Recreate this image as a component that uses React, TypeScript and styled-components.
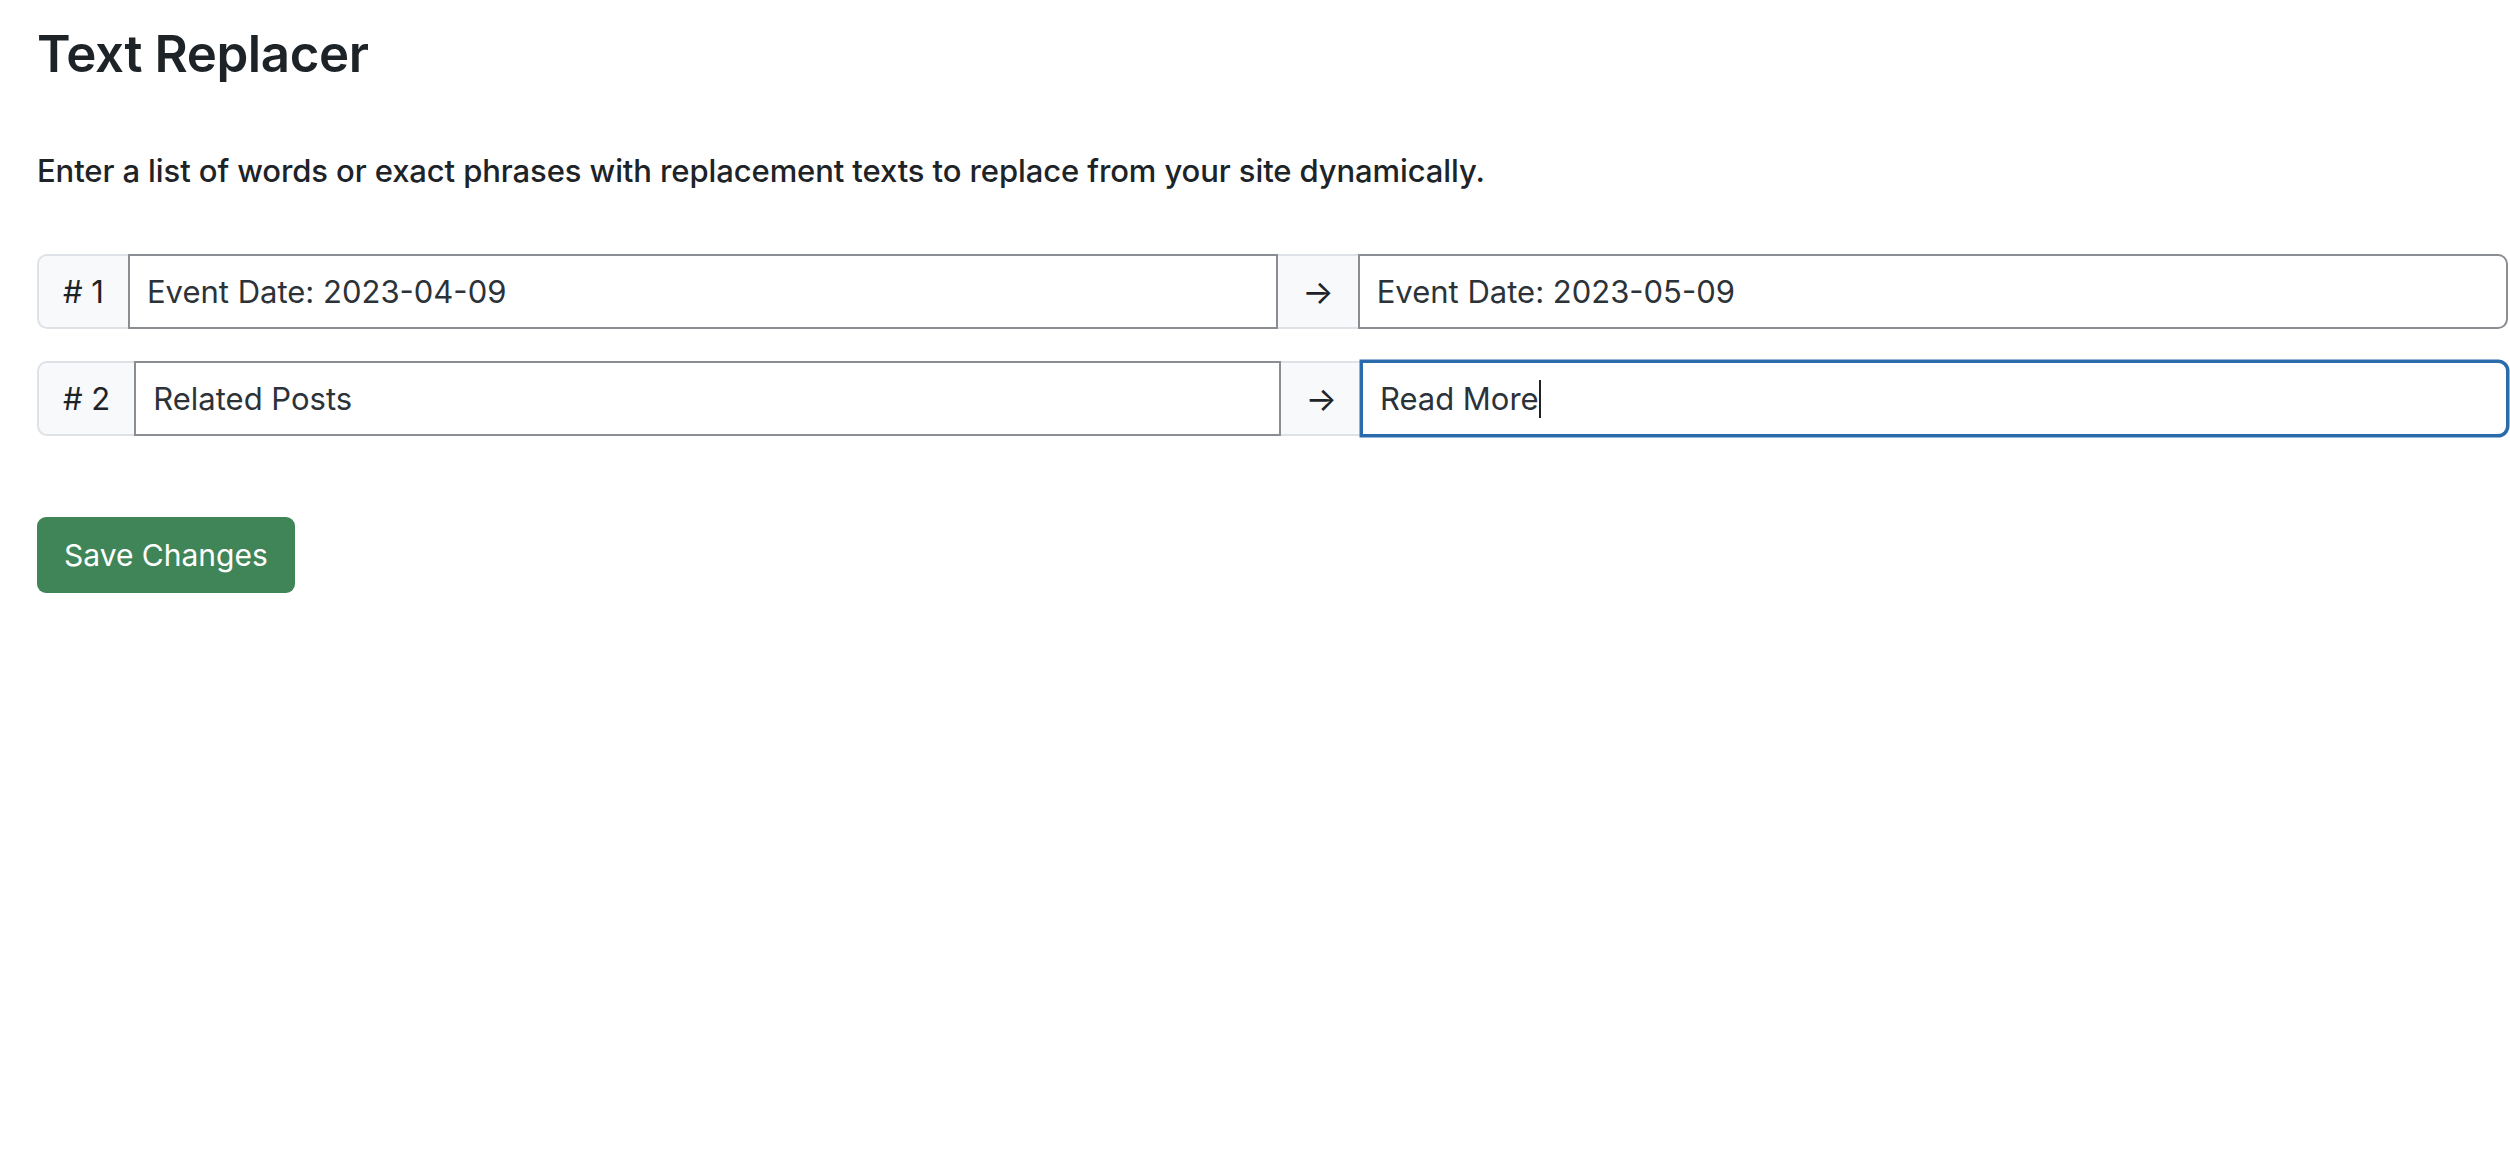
import React from "react";
import styled, { createGlobalStyle } from "styled-components";

const GlobalStyle = createGlobalStyle`
    body {
        margin: 0;
        background: #fff;
        font-family: Inter, "Noto Sans", "Liberation Sans", sans-serif;
        color: #1d2327;
    }
`;

interface IReplacement {
    find: string;
    replace: string;
    focused?: boolean;
}

const rows: IReplacement[] = [
    { find: "Event Date: 2023-04-09", replace: "Event Date: 2023-05-09" },
    { find: "Related Posts", replace: "Read More", focused: true },
];

const App = () => {
    return (
        <Page>
            <GlobalStyle />
            <Title>Text Replacer</Title>
            <Intro>
                Enter a list of words or exact phrases with replacement texts to replace from your site dynamically.
            </Intro>
            <Rows>
                {rows.map((r, i) => (
                    <Group key={i}>
                        <Addon $first>#&nbsp;{i + 1}</Addon>
                        <Field>{r.find}</Field>
                        <Addon>→</Addon>
                        <Field $last $focused={r.focused}>
                            {r.replace}
                            {r.focused && <Caret />}
                        </Field>
                    </Group>
                ))}
            </Rows>
            <SaveButton type="button">Save Changes</SaveButton>
        </Page>
    );
};

export default App;

const Page = styled.div`
    display: flex;
    flex-direction: column;
    align-items: stretch;
    padding: 23px 2px 0 37px;
`;

const Title = styled.h1`
    margin: 0;
    font-size: 51px;
    font-weight: 600;
    line-height: 1.2;
    letter-spacing: -0.4px;
`;

const Intro = styled.p`
    margin: 65px 0 0;
    font-size: 31px;
    font-weight: 500;
    line-height: 44px;
    letter-spacing: -0.1px;
`;

const Rows = styled.div`
    display: flex;
    flex-direction: column;
    gap: 32px;
    margin-top: 61px;
`;

const Group = styled.div`
    display: flex;
    height: 75px;
`;

const Addon = styled.div<{ $first?: boolean }>`
    display: flex;
    align-items: center;
    justify-content: center;
    padding: 0 24px;
    background: #f8f9fa;
    border: 2px solid #dee2e6;
    border-left-width: ${(p) => (p.$first ? "2px" : "0")};
    border-right-width: 0;
    border-radius: ${(p) => (p.$first ? "10px 0 0 10px" : "0")};
    font-size: ${(p) => (p.$first ? "31px" : "33px")};
    color: #1d2327;
    white-space: nowrap;
`;

const Field = styled.div<{ $focused?: boolean; $last?: boolean }>`
    flex: 1 1 0;
    min-width: 0;
    display: flex;
    align-items: center;
    padding: 0 17px;
    background: #fff;
    border: 2px solid ${(p) => (p.$focused ? "#2a6cab" : "#8a8d92")};
    box-shadow: ${(p) => (p.$focused ? "0 0 0 1.5px #2a6cab" : "none")};
    border-radius: ${(p) => (p.$last ? "0 10px 10px 0" : "0")};
    font-size: 31px;
    color: #2c3338;
    white-space: nowrap;
`;

const Caret = styled.span`
    display: inline-block;
    width: 2px;
    height: 38px;
    margin-left: 0;
    background: #1d2327;
`;

const SaveButton = styled.button`
    align-self: flex-start;
    margin-top: 81px;
    height: 76px;
    padding: 0 27px;
    border: none;
    border-radius: 9px;
    background: #408558;
    color: #fff;
    font-family: inherit;
    font-size: 30px;
    font-weight: 400;
    cursor: pointer;
`;
